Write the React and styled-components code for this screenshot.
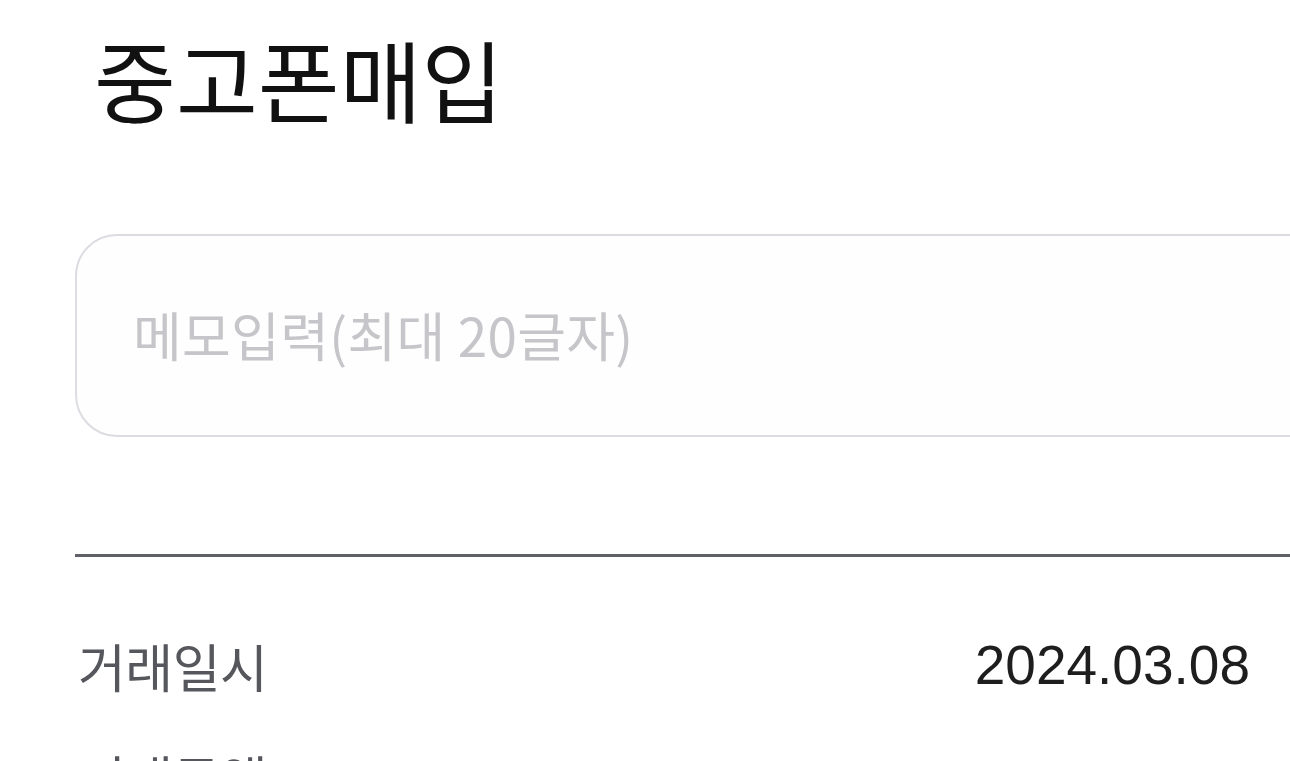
import React from "react";
import styled, { createGlobalStyle } from "styled-components";

const Global = createGlobalStyle`
  html, body {
    margin: 0;
    padding: 0;
    background: #ffffff;
    overflow: hidden;
  }
  body {
    font-family: "Noto Sans CJK KR", "Noto Sans", sans-serif;
  }
`;

const Page = styled.div`
  width: 1290px;
  height: 761px;
  overflow: hidden;
  box-sizing: border-box;
  padding: 33px 0 0 75px;
  display: flex;
  flex-direction: column;
  & > * {
    flex-shrink: 0;
  }
`;

const Title = styled.h1`
  margin: 0 0 0 19px;
  font-size: 89px;
  line-height: 89px;
  font-weight: 400;
  letter-spacing: 0;
  color: #111111;
`;

const MemoBox = styled.div`
  margin-top: 112px;
  width: 1300px;
  height: 203px;
  box-sizing: border-box;
  border: 2.5px solid #dcdce2;
  border-radius: 42px;
  background: #fefefe;
  display: flex;
  align-items: center;
  padding-left: 56px;
`;

const MemoInput = styled.input`
  border: none;
  outline: none;
  background: transparent;
  width: 100%;
  font-family: "Noto Sans CJK KR", "Noto Sans", sans-serif;
  font-size: 53px;
  letter-spacing: 0.3px;
  color: #222;
  padding: 0 0 3px 0;
  &::placeholder {
    color: #c6c6ca;
  }
`;

const Divider = styled.hr`
  margin: 117px 0 0 0;
  width: 1300px;
  height: 3px;
  border: none;
  background: #5f6068;
`;

const InfoList = styled.div`
  margin-top: 52px;
  width: 1175px;
  display: flex;
  flex-direction: column;
`;

const InfoRow = styled.div`
  height: 112px;
  display: flex;
  align-items: center;
  justify-content: space-between;
`;

const Label = styled.span`
  font-size: 52px;
  letter-spacing: -0.5px;
  color: #55575c;
  padding-left: 3px;
`;

const Value = styled.span`
  font-family: "Liberation Sans", Arial, sans-serif;
  font-size: 55px;
  color: #1e1e1e;
`;

const rows = [
  { label: "거래일시", value: "2024.03.08" },
  { label: "거래금액", value: "" },
];

export default function App() {
  return (
    <>
      <Global />
      <Page>
        <Title>중고폰매입</Title>
        <MemoBox>
          <MemoInput placeholder="메모입력(최대 20글자)" maxLength={20} />
        </MemoBox>
        <Divider />
        <InfoList>
          {rows.map((r) => (
            <InfoRow key={r.label}>
              <Label>{r.label}</Label>
              <Value>{r.value}</Value>
            </InfoRow>
          ))}
        </InfoList>
      </Page>
    </>
  );
}
